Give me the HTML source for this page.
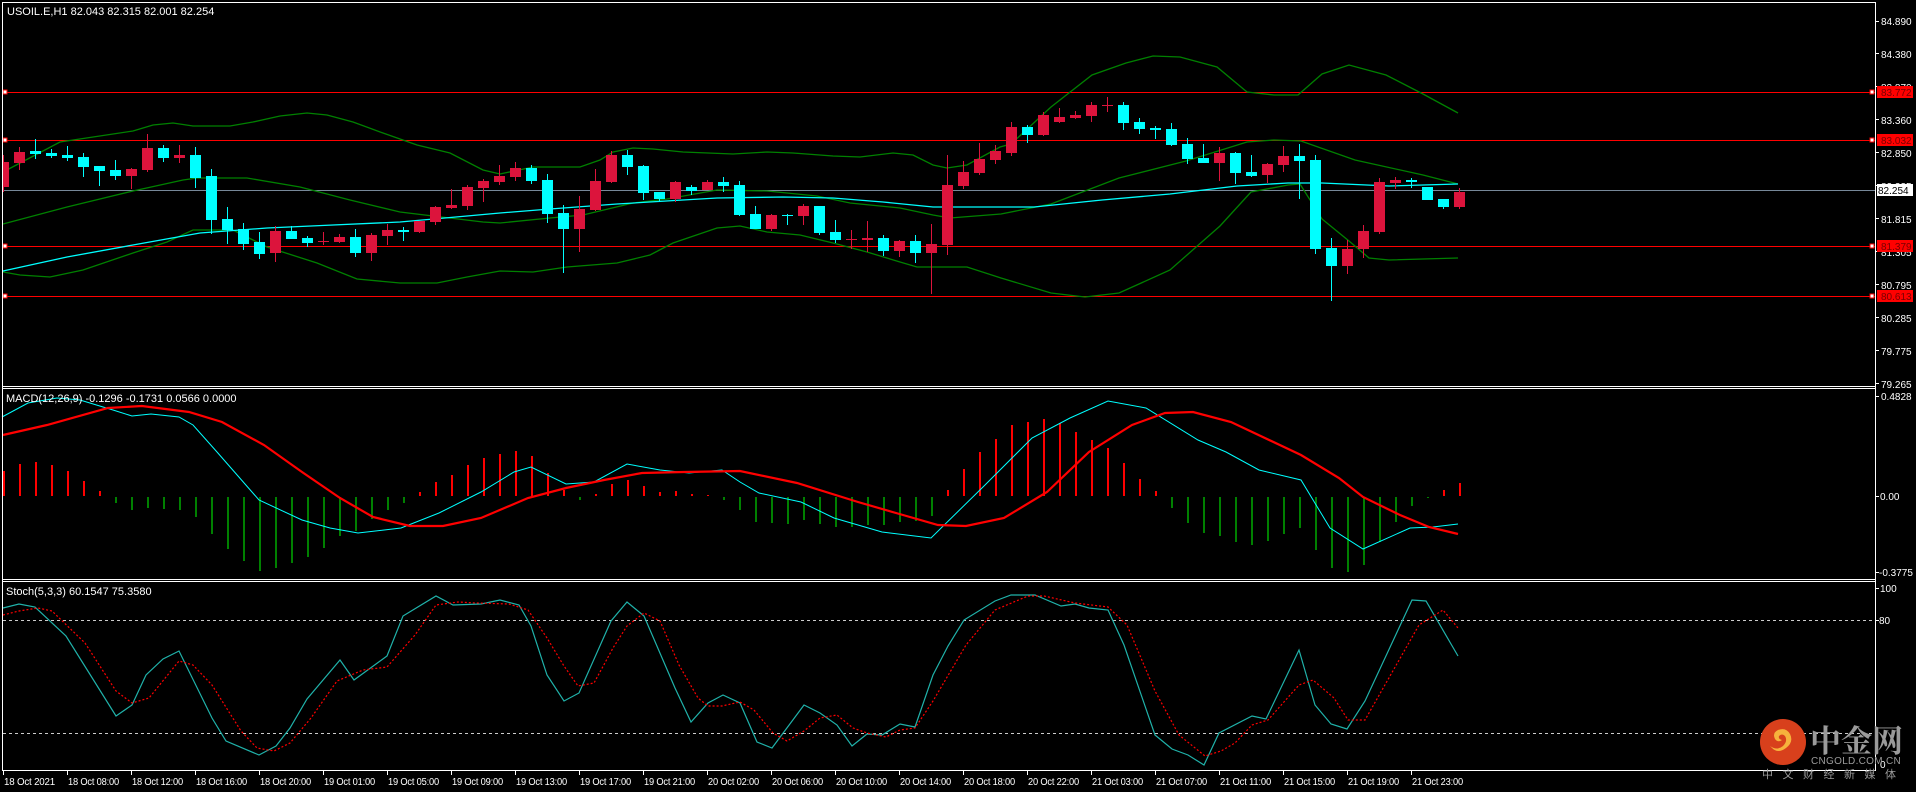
<!DOCTYPE html>
<html><head><meta charset="utf-8">
<style>
html,body{margin:0;padding:0;background:#000;width:1916px;height:792px;overflow:hidden}
svg{display:block}
text{font-family:"Liberation Sans",sans-serif;font-size:11px;fill:#fff}
.ax text{fill:#fff;font-size:10px}
#tl text{font-size:10px;letter-spacing:-0.2px}
</style></head><body>
<svg id="s" width="1916" height="792" viewBox="0 0 1916 792" xmlns="http://www.w3.org/2000/svg">
<rect width="1916" height="792" fill="#000"/>
<g id="g"></g>
<g stroke="#fff" stroke-width="1" fill="none" shape-rendering="crispEdges">
<line x1="2.5" y1="2.5" x2="1875.5" y2="2.5"/>
<line x1="2.5" y1="2" x2="2.5" y2="771"/>
<line x1="1875.5" y1="2" x2="1875.5" y2="771"/>
<line x1="2" y1="386.5" x2="1876" y2="386.5"/>
<line x1="2" y1="388.5" x2="1876" y2="388.5"/>
<line x1="2" y1="579.5" x2="1876" y2="579.5"/>
<line x1="2" y1="581.5" x2="1876" y2="581.5"/>
<line x1="2" y1="770.5" x2="1876" y2="770.5"/>
</g>
<text x="7" y="15">USOIL.E,H1  82.043 82.315 82.001 82.254</text>
<text x="6" y="402">MACD(12,26,9) -0.1296 -0.1731 0.0566 0.0000</text>
<text x="6" y="595">Stoch(5,3,3) 60.1547 75.3580</text>
<g class="ax">
<text x="1881" y="25">84.890</text>
<text x="1881" y="58">84.380</text>
<text x="1881" y="91">83.870</text>
<text x="1881" y="124">83.360</text>
<text x="1881" y="157">82.850</text>
<text x="1881" y="190">82.335</text>
<text x="1881" y="223">81.815</text>
<text x="1881" y="256">81.305</text>
<text x="1881" y="289">80.795</text>
<text x="1881" y="322">80.285</text>
<text x="1881" y="355">79.775</text>
<text x="1881" y="388">79.265</text>
<text x="1881" y="400">0.4828</text>
<text x="1880" y="500">0.00</text>
<text x="1879" y="576">-0.3775</text>
<text x="1880" y="592">100</text>
<text x="1879" y="624">80</text>
<text x="1880" y="768">0</text>
</g>
<g stroke="#fff" shape-rendering="crispEdges" id="ticks"></g>
<g shape-rendering="crispEdges">
<rect x="1877" y="86" width="36" height="12" fill="#f00"/>
<rect x="1877" y="134" width="36" height="12" fill="#f00"/>
<rect x="1877" y="240" width="36" height="12" fill="#f00"/>
<rect x="1877" y="290" width="36" height="12" fill="#f00"/>
<rect x="1877" y="184" width="36" height="12" fill="#fff"/>
</g>
<g style="font-size:10px">
<text x="1881" y="96" style="fill:#700;font-size:10px">83.772</text>
<text x="1881" y="144" style="fill:#700;font-size:10px">83.032</text>
<text x="1881" y="250" style="fill:#700;font-size:10px">81.379</text>
<text x="1881" y="300" style="fill:#700;font-size:10px">80.613</text>
<text x="1878" y="194" style="fill:#000;font-size:10px">82.254</text>
</g>
<g id="tl"></g>
<circle cx="1783" cy="742" r="23" fill="#d8401c"/>
<path d="M1772 748 q6 6 14 0 q8 -6 4 -14 q-4 -7 -12 -4 q-6 3 -3 9 q3 4 7 1 q-4 -1 -3 -4 q3 -3 6 0 q3 5 -2 10 q-6 5 -13 0 z" fill="#f6b23c"/>
<text x="1810" y="752" style="font-family:'Noto Serif CJK SC','Noto Sans CJK SC',serif;font-size:31px;font-weight:bold;fill:#9a9a9a">中金网</text>
<text x="1811" y="764" style="font-size:10px;fill:#9a9a9a;letter-spacing:0.3px">CNGOLD.COM.CN</text>
<text x="1762" y="778" style="font-family:'Noto Sans CJK SC',sans-serif;font-size:11px;fill:#9a9a9a;letter-spacing:9.5px">中文财经新媒体</text>
</svg>
<script>
var NS="http://www.w3.org/2000/svg",g=document.getElementById("g");
function el(t,a,p){var e=document.createElementNS(NS,t);for(var k in a)e.setAttribute(k,a[k]);(p||g).appendChild(e);return e;}
function pl(pts,c,w,extra){var s=pts.map(function(p){return p[0]+","+p[1]}).join(" ");var a={points:s,fill:"none",stroke:c,"stroke-width":w};if(extra)for(var k in extra)a[k]=extra[k];el("polyline",a);}
el("line",{x1:3,y1:190.5,x2:1875,y2:190.5,stroke:"#778899","stroke-width":1,"shape-rendering":"crispEdges"});
[92.5,140.5,246.5,296.5].forEach(function(y){el("line",{x1:3,y1:y,x2:1875,y2:y,stroke:"#f00","stroke-width":1,"shape-rendering":"crispEdges"});
 el("rect",{x:3,y:y-2.5,width:4,height:4,fill:"#fff",stroke:"#f00","stroke-width":1});
 el("rect",{x:1870,y:y-2.5,width:4,height:4,fill:"#fff",stroke:"#f00","stroke-width":1});});
var up=[[3,172],[60,142],[133,131],[153,125],[173,123],[193,126],[230,126],[253,122],[280,116],[307,113],[327,115],[353,122],[383,133],[417,145],[450,153],[483,170],[500,174],[533,167],[580,167],[600,160],[613,152],[633,148],[653,149],[683,152],[733,154],[767,152],[793,153],[833,156],[860,157],[893,153],[913,155],[933,165],[947,168],[967,165],[1000,147],[1011,144],[1051,107],[1092,75],[1126,63],[1153,56],[1180,57],[1217,67],[1247,92],[1274,95],[1298,95],[1322,74],[1349,65],[1386,75],[1423,94],[1458,113]];
var mid=[[3,224],[67,207],[133,191],[183,180],[197,178],[247,178],[300,187],[350,200],[400,212],[433,216],[483,222],[500,223],[550,218],[583,215],[633,203],[667,199],[717,190],[767,191],[817,196],[850,203],[900,208],[933,215],[950,218],[1001,214],[1051,204],[1119,178],[1186,161],[1247,142],[1274,140],[1301,141],[1355,160],[1423,175],[1458,184]];
var lo=[[3,272],[20,275],[50,277],[83,270],[133,253],[167,242],[193,230],[233,230],[267,247],[317,263],[357,279],[400,283],[437,283],[467,277],[500,271],[533,272],[567,267],[617,263],[650,255],[673,243],[717,228],[740,226],[767,232],[800,235],[833,243],[867,252],[900,262],[917,267],[967,267],[1001,278],[1051,293],[1085,297],[1119,293],[1170,270],[1220,226],[1251,192],[1288,185],[1300,184],[1322,219],[1349,241],[1369,258],[1389,260],[1458,258]];
var ma=[[3,271],[67,257],[133,245],[200,233],[267,228],[333,225],[400,222],[467,216],[500,213],[550,209],[617,204],[683,200],[717,198],[783,197],[833,198],[883,202],[933,207],[1000,207],[1034,207],[1102,200],[1170,194],[1237,186],[1288,183],[1322,183],[1389,186],[1458,184]];
pl(up,"#008000",1.3);pl(mid,"#008000",1.3);pl(lo,"#008000",1.3);pl(ma,"#00ffff",1.3);
var A=[[155,230,135,245,"R"],[126,158,111,180,"R"],[123,132,87,147,"C"],[129,138,117,144,"C"],[135,144,108,153,"C"],[141,171,129,201,"C"],[168,183,168,228,"C"],[180,198,150,210,"C"],[177,198,174,237,"R"],[114,180,72,186,"R"],[114,144,105,156,"C"],[135,144,105,159,"R"],[135,204,111,234,"C"],[198,330,177,372,"C"],[327,360,291,402,"C"],[357,402,339,420,"C"],[396,432,366,447,"C"],[363,429,348,456,"R"],[363,387,348,387,"C"],[384,399,378,411,"C"],[393,396,366,405,"R"],[381,396,372,399,"R"],[381,429,357,441,"C"],[375,429,369,453,"R"],[360,378,342,405,"R"],[360,366,351,393,"C"],[333,366,333,369,"R"],[291,336,288,345,"R"],[285,294,237,297,"R"],[231,288,225,300,"R"],[213,234,207,276,"R"],[198,216,165,225,"R"],
[174,201,156,213,"R"],[174,213,165,222,"C"],[210,312,192,339,"C"],[309,357,285,489,"C"],[297,357,258,426,"R"],[213,300,177,303,"R"],[135,216,123,219,"R"],[135,171,120,195,"C"],[168,249,165,270,"C"],[246,267,246,273,"C"],[216,267,213,276,"R"],[231,243,225,255,"C"],[216,240,210,240,"R"],[216,228,201,246,"C"],[225,315,213,318,"C"],[312,357,288,357,"C"],[315,357,312,363,"R"],[315,318,312,345,"C"],[288,318,282,345,"R"],[288,369,288,375,"C"],[366,390,330,399,"C"],[387,390,360,417,"R"],[384,390,333,426,"R"],[384,423,375,438,"C"],[393,423,390,441,"R"],[393,429,375,459,"C"],[402,429,342,552,"R"],[225,405,135,435,"R"],[186,228,153,237,"R"],[147,189,99,195,"R"],[123,150,105,162,"R"]];
var B=[[228,305,213,315,"R"],[228,251,222,275,"C"],[192,251,183,255,"R"],[198,213,171,216,"R"],[192,201,180,204,"R"],[162,195,153,213,"R"],[162,164,138,183,"R"],[162,216,153,237,"C"],[213,234,201,249,"C"],[231,237,225,264,"C"],[234,282,216,285,"C"],[279,324,261,336,"C"],[321,333,279,333,"C"],[306,333,288,387,"R"],[306,363,303,396,"C"],[360,372,312,375,"C"],[336,369,333,393,"R"],[315,339,285,360,"R"],[315,330,279,441,"C"],[327,588,312,603,"C"],[585,639,555,744,"C"],[588,639,561,663,"R"],[537,588,519,615,"R"],[390,540,378,546,"R"],[384,393,375,411,"R"],[384,390,378,408,"C"],[405,444,405,444,"C"],[441,465,441,471,"C"],[420,465,408,471,"R"]];
var cg=el("g",{"shape-rendering":"crispEdges"});
function cand(k,c,f,off){var x=Math.round(3.3+16*k);var col=c[4]=="R"?"#dc143c":"#00ffff";
 var bt=Math.round(off+c[0]/f),bb=Math.round(off+c[1]/f),wt=Math.round(off+c[2]/f),wb=Math.round(off+c[3]/f);
 var L=Math.max(3,x-5);
 el("rect",{x:x,y:wt,width:1,height:Math.max(1,wb-wt),fill:col},cg);
 el("rect",{x:L,y:bt,width:x+6-L,height:Math.max(1,bb-bt),fill:col},cg);}
A.forEach(function(c,k){cand(k,c,3,110);});
B.forEach(function(c,i){cand(63+i,c,2.96,50);});
var H=[25,32,34,31,25,15,5,-6,-13,-11,-12,-13,-20,-37,-52,-64,-74,-71,-66,-60,-51,-39,-34,-22,-13,-6,4,14,21,31,38,42,45,40,23,6,-3,2,12,16,10,4,5,2,1,-3,-13,-25,-26,-27,-23,-27,-30,-30,-28,-28,-25,-24,-19,6,27,44,57,71,74,77,73,64,56,48,33,17,5,-11,-26,-36,-39,-45,-48,-44,-37,-31,-53,-71,-75,-68,-45,-25,-9,-1,6,13];
var hg=el("g",{"shape-rendering":"crispEdges"});
H.forEach(function(h,k){var x=Math.round(3.3+16*k);var c=h>0?"#ff0000":"#008000";
 if(h>0)el("rect",{x:x,y:496-h,width:2,height:h,fill:c},hg);else el("rect",{x:x,y:497,width:2,height:-h,fill:c},hg);});
pl([[2,417],[28,403],[57,398],[80,400],[113,410],[132,416],[151,414],[179,417],[193,425],[217,452],[259,500],[302,520],[330,528],[358,533],[401,528],[439,513],[481,492],[514,472],[531,467],[566,484],[594,482],[627,464],[660,470],[689,473],[722,470],[740,482],[759,493],[801,502],[834,518],[882,532],[931,538],[985,485],[1032,438],[1070,418],[1108,401],[1146,408],[1198,440],[1226,452],[1259,470],[1301,480],[1330,528],[1363,549],[1410,528],[1433,527],[1458,524]],"#00ffff",1);
pl([[3,435],[47,425],[108,408],[142,406],[189,412],[222,422],[264,445],[302,472],[340,498],[373,517],[410,526],[443,526],[481,518],[528,498],[566,488],[604,480],[642,473],[684,472],[740,471],[797,483],[858,502],[896,513],[938,525],[966,526],[1004,518],[1047,492],[1089,452],[1132,425],[1165,413],[1193,412],[1231,422],[1301,455],[1339,478],[1363,497],[1400,515],[1429,527],[1458,534]],"#ff0000",2.2);
el("line",{x1:3,y1:620.5,x2:1875,y2:620.5,stroke:"#ccc","stroke-dasharray":"3,3","shape-rendering":"crispEdges"});
el("line",{x1:3,y1:733.5,x2:1875,y2:733.5,stroke:"#ccc","stroke-dasharray":"3,3","shape-rendering":"crispEdges"});
pl([[3,608],[19,604],[35,607],[66,636],[116,716],[132,705],[146,675],[163,659],[179,651],[212,718],[226,741],[259,755],[276,746],[290,728],[307,699],[340,660],[354,680],[387,656],[403,616],[436,596],[453,605],[481,604],[500,600],[519,605],[531,626],[547,675],[564,701],[579,693],[611,621],[627,602],[644,616],[675,688],[691,722],[708,703],[723,695],[740,703],[757,742],[772,748],[804,705],[820,713],[837,725],[852,746],[867,734],[882,735],[900,724],[915,727],[933,675],[948,646],[964,620],[995,601],[1011,595],[1035,595],[1061,606],[1075,604],[1089,608],[1108,610],[1124,645],[1155,735],[1172,749],[1188,755],[1204,765],[1219,733],[1252,716],[1266,719],[1299,650],[1315,705],[1331,724],[1347,729],[1365,701],[1412,600],[1426,601],[1458,656]],"#20b2aa",1.2);
pl([[3,615],[19,611],[38,608],[52,611],[85,643],[116,691],[132,703],[149,698],[179,661],[193,665],[212,685],[241,731],[257,748],[274,751],[290,743],[311,718],[337,681],[363,670],[387,667],[415,635],[436,605],[458,602],[476,603],[509,604],[528,610],[547,638],[564,666],[578,686],[594,683],[613,648],[627,626],[644,613],[660,621],[679,665],[698,698],[708,706],[722,706],[740,702],[754,710],[773,733],[787,741],[804,731],[820,718],[837,715],[853,728],[867,733],[886,737],[900,730],[915,728],[933,701],[966,645],[995,610],[1028,596],[1044,596],[1075,603],[1108,607],[1127,625],[1155,691],[1179,735],[1205,756],[1221,751],[1235,743],[1252,725],[1268,720],[1299,685],[1313,680],[1334,698],[1348,720],[1365,720],[1419,625],[1443,610],[1458,628]],"#ff0000",1.2,{"stroke-dasharray":"2,2"});
var tk=document.getElementById("ticks");
[21,53,86,119,152,185,218,251,284,317,350,383,396,496,572,588,620].forEach(function(y){el("line",{x1:1875,y1:y+0.5,x2:1879,y2:y+0.5},tk);});
var T=["18 Oct 2021","18 Oct 08:00","18 Oct 12:00","18 Oct 16:00","18 Oct 20:00","19 Oct 01:00","19 Oct 05:00","19 Oct 09:00","19 Oct 13:00","19 Oct 17:00","19 Oct 21:00","20 Oct 02:00","20 Oct 06:00","20 Oct 10:00","20 Oct 14:00","20 Oct 18:00","20 Oct 22:00","21 Oct 03:00","21 Oct 07:00","21 Oct 11:00","21 Oct 15:00","21 Oct 19:00","21 Oct 23:00"];
var tl=document.getElementById("tl");
T.forEach(function(s,i){var x=Math.round(3.3+64*i);el("line",{x1:x+0.5,y1:771,x2:x+0.5,y2:775,stroke:"#fff","shape-rendering":"crispEdges"},tl);
 var t=el("text",{x:x+1,y:785,textLength:51,lengthAdjust:"spacingAndGlyphs"},tl);t.textContent=s;});
</script>
</body></html>
